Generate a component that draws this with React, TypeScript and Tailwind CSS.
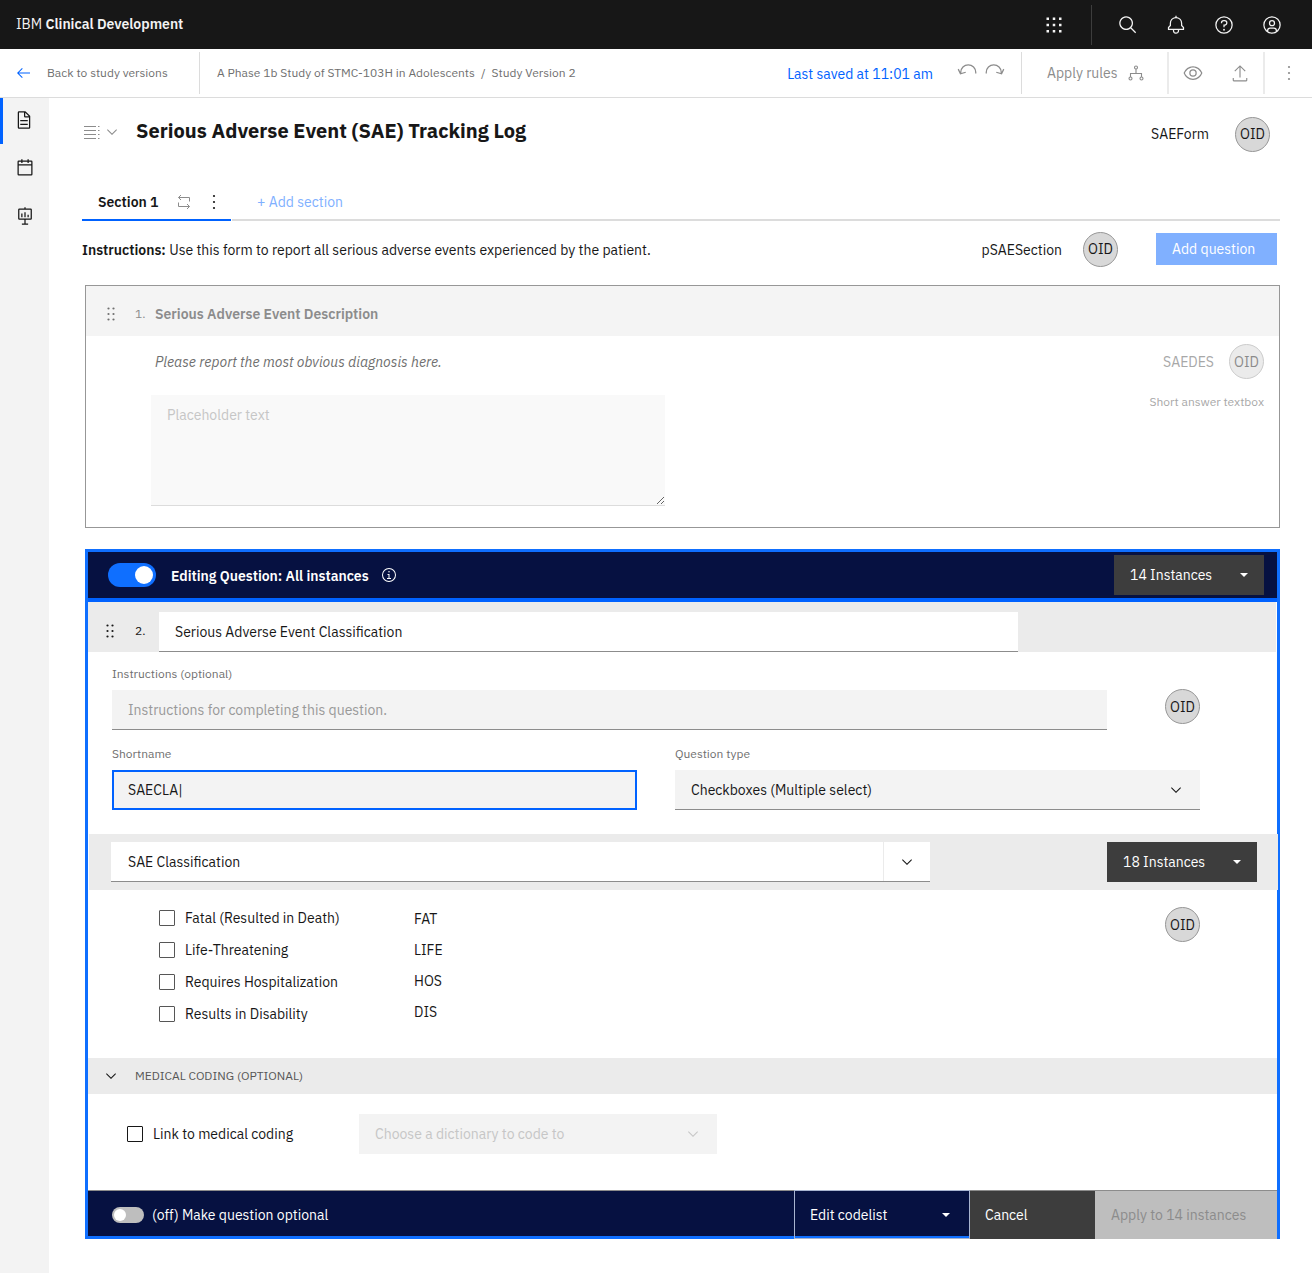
import clsx from 'clsx'
import { useId, useState } from 'react'
import type { ReactNode } from 'react'

interface IconProps {
  size?: number
  className?: string
  children: ReactNode
}

function Icon({ size = 16, className, children }: IconProps) {
  return (
    <svg
      width={size}
      height={size}
      viewBox="0 0 32 32"
      fill="currentColor"
      aria-hidden="true"
      className={clsx('shrink-0', className)}
    >
      {children}
    </svg>
  )
}

type GlyphProps = Omit<IconProps, 'children'>

const ArrowLeft = (props: GlyphProps) => (
  <Icon {...props}>
    <path d="M14 26l1.41-1.41L7.83 17H30v-2H7.83l7.58-7.59L14 6 4 16z" />
  </Icon>
)

const ChevronDown = (props: GlyphProps) => (
  <Icon {...props}>
    <path d="M16 22L6 12l1.4-1.4 8.6 8.6 8.6-8.6L26 12z" />
  </Icon>
)

const CaretDown = (props: GlyphProps) => (
  <Icon {...props}>
    <path d="M24 12l-8 8-8-8z" />
  </Icon>
)

const SearchIcon = (props: GlyphProps) => (
  <Icon {...props}>
    <path d="M29 27.586l-7.552-7.552a11.018 11.018 0 1 0-1.414 1.414L27.586 29zM4 13a9 9 0 1 1 9 9 9.01 9.01 0 0 1-9-9z" />
  </Icon>
)

const BellIcon = (props: GlyphProps) => (
  <Icon {...props}>
    <path d="M28.707 19.293L26 16.586V13a10.014 10.014 0 0 0-9-9.95V1h-2v2.05A10.014 10.014 0 0 0 6 13v3.586l-2.707 2.707A1 1 0 0 0 3 20v3a1 1 0 0 0 1 1h7v.777a5.152 5.152 0 0 0 4.5 5.199A5.006 5.006 0 0 0 21 25v-1h7a1 1 0 0 0 1-1v-3a1 1 0 0 0-.293-.707zM19 25a3 3 0 0 1-6 0v-1h6zm8-3H5v-1.586l2.707-2.707A1 1 0 0 0 8 17v-4a8 8 0 0 1 16 0v4a1 1 0 0 0 .293.707L27 20.414z" />
  </Icon>
)

const HelpIcon = (props: GlyphProps) => (
  <Icon {...props}>
    <path d="M16 2a14 14 0 1 0 14 14A14 14 0 0 0 16 2zm0 26a12 12 0 1 1 12-12 12 12 0 0 1-12 12z" />
    <circle cx="16" cy="23.5" r="1.5" />
    <path d="M17 8h-1.5a4.49 4.49 0 0 0-4.5 4.5v.5h2v-.5a2.5 2.5 0 0 1 2.5-2.5H17a2.5 2.5 0 0 1 0 5h-2v4.5h2V17a4.5 4.5 0 0 0 0-9z" />
  </Icon>
)

const UserIcon = (props: GlyphProps) => (
  <Icon {...props}>
    <path d="M16 8a5 5 0 1 0 5 5 5 5 0 0 0-5-5zm0 8a3 3 0 1 1 3-3 3 3 0 0 1-3 3z" />
    <path d="M16 2a14 14 0 1 0 14 14A14.016 14.016 0 0 0 16 2zm-6 24.377V25a3 3 0 0 1 3-3h6a3 3 0 0 1 3 3v1.377a11.9 11.9 0 0 1-12 0zm13.993-1.451A5 5 0 0 0 19 20h-6a5 5 0 0 0-4.993 4.926 12 12 0 1 1 15.985 0z" />
  </Icon>
)

const SwitcherIcon = (props: GlyphProps) => (
  <Icon {...props}>
    {[4, 14, 24].map((y) => [4, 14, 24].map((x) => <rect key={`${x}-${y}`} x={x} y={y} width="4" height="4" />))}
  </Icon>
)

const DocumentIcon = (props: GlyphProps) => (
  <Icon {...props}>
    <path d="M25.7 9.3l-7-7A1 1 0 0 0 18 2H8a2 2 0 0 0-2 2v24a2 2 0 0 0 2 2h16a2 2 0 0 0 2-2V10a1 1 0 0 0-.3-.7zM18 4.4l5.6 5.6H18zM24 28H8V4h8v6a2 2 0 0 0 2 2h6z" />
    <path d="M10 22h12v2H10zM10 16h12v2H10z" />
  </Icon>
)

const CalendarIcon = (props: GlyphProps) => (
  <Icon {...props}>
    <path d="M26 4h-4V2h-2v2h-8V2h-2v2H6a2 2 0 0 0-2 2v20a2 2 0 0 0 2 2h20a2 2 0 0 0 2-2V6a2 2 0 0 0-2-2zm0 22H6V12h20zm0-16H6V6h4v2h2V6h8v2h2V6h4z" />
  </Icon>
)

const ReportIcon = (props: GlyphProps) => (
  <Icon {...props}>
    <path d="M15 10h2v8h-2zM20 14h2v4h-2zM10 12h2v6h-2z" />
    <path d="M25 4h-8V2h-2v2H7a2 2 0 0 0-2 2v14a2 2 0 0 0 2 2h8v6h-4v2h10v-2h-4v-6h8a2 2 0 0 0 2-2V6a2 2 0 0 0-2-2zm0 16H7V6h18z" />
  </Icon>
)

const ViewIcon = (props: GlyphProps) => (
  <Icon {...props}>
    <path d="M30.94 15.66A16.69 16.69 0 0 0 16 5 16.69 16.69 0 0 0 1.06 15.66a1 1 0 0 0 0 .68A16.69 16.69 0 0 0 16 27a16.69 16.69 0 0 0 14.94-10.66 1 1 0 0 0 0-.68zM16 25c-5.3 0-10.9-3.93-12.93-9C5.1 10.93 10.7 7 16 7s10.9 3.93 12.93 9C26.9 21.07 21.3 25 16 25z" />
    <path d="M16 10a6 6 0 1 0 6 6 6 6 0 0 0-6-6zm0 10a4 4 0 1 1 4-4 4 4 0 0 1-4 4z" />
  </Icon>
)

const ExportIcon = (props: GlyphProps) => (
  <Icon {...props}>
    <path d="M27 25v4H5v-4H3v4a2 2 0 0 0 2 2h22a2 2 0 0 0 2-2v-4zM6 12l1.41 1.41L15 5.83V24h2V5.83l7.59 7.58L26 12 16 2z" />
  </Icon>
)

const OverflowIcon = (props: GlyphProps) => (
  <Icon {...props}>
    <circle cx="16" cy="4" r="2.2" />
    <circle cx="16" cy="16" r="2.2" />
    <circle cx="16" cy="28" r="2.2" />
  </Icon>
)

const DragIcon = (props: GlyphProps) => (
  <Icon {...props}>
    {[5, 16, 27].map((y) => [11, 21].map((x) => <circle key={`${x}-${y}`} cx={x} cy={y} r="2.2" />))}
  </Icon>
)

const UndoIcon = (props: GlyphProps) => (
  <Icon {...props}>
    <path
      d="M30 20V18a12 12 0 0 0-24 0v2M2 13l3.500 7.500 8.500-2.500"
      fill="none"
      stroke="currentColor"
      strokeWidth="2"
    />
  </Icon>
)

const RulesIcon = (props: GlyphProps) => (
  <Icon {...props}>
    <g fill="none" stroke="currentColor" strokeWidth="2.2">
      <circle cx="16" cy="5" r="3" />
      <circle cx="5" cy="27" r="3" />
      <circle cx="27" cy="27" r="3" />
      <path d="M16 8v9M5 24v-7h22v7" />
    </g>
  </Icon>
)

const ListIcon = (props: GlyphProps) => (
  <Icon {...props}>
    <path d="M0 4h24v2H0zM0 12h24v2H0zM0 20h24v2H0zM0 28h24v2H0zM28 4h3v2h-3zM28 12h3v2h-3zM28 20h3v2h-3zM28 28h3v2h-3z" />
  </Icon>
)

const RepeatIcon = (props: GlyphProps) => (
  <Icon {...props}>
    <path
      d="M10 2L5 7l5 5M5 7h22v8M22 20l5 5-5 5M27 25H5v-8"
      fill="none"
      stroke="currentColor"
      strokeWidth="2"
    />
  </Icon>
)

const InfoIcon = (props: GlyphProps) => (
  <Icon {...props}>
    <path d="M17 22v-8h-4v2h2v6h-3v2h8v-2zM16 8a1.500 1.500 0 1 0 1.500 1.500A1.500 1.500 0 0 0 16 8z" />
    <path d="M16 30a14 14 0 1 1 14-14 14 14 0 0 1-14 14zm0-26a12 12 0 1 0 12 12A12 12 0 0 0 16 4z" />
  </Icon>
)

function IconButton({ label, className, children }: { label: string; className?: string; children: ReactNode }) {
  return (
    <button type="button" aria-label={label} className={clsx('flex items-center justify-center', className)}>
      {children}
    </button>
  )
}

function OidBadge({ muted = false }: { muted?: boolean }) {
  return (
    <button
      type="button"
      className={clsx(
        'flex size-[35px] shrink-0 items-center justify-center rounded-full border text-sm',
        muted ? 'border-[#cccccc] bg-[#ebebeb] text-[#8b8b8b]' : 'border-[#979797] bg-[#d8d8d8] text-[#171717]',
      )}
    >
      OID
    </button>
  )
}

function InstancesButton({ count }: { count: number }) {
  return (
    <button
      type="button"
      className="flex h-10 w-[150px] shrink-0 items-center justify-between bg-[#3d3d3d] pl-4 pr-3 text-white"
    >
      {count} Instances
      <CaretDown />
    </button>
  )
}

function AppHeader() {
  return (
    <header className="flex h-[49px] items-center justify-between bg-[#171717] px-4 text-[#f3f3f3]">
      <a href="#" className="pb-0.5 text-sm">
        IBM <span className="font-semibold">Clinical Development</span>
      </a>
      <div className="flex items-center">
        <IconButton label="Switch application" className="mr-[13px] size-12">
          <SwitcherIcon size={20} />
        </IconButton>
        <div className="mr-3 h-10 w-px bg-[#3d3d3d]" />
        <IconButton label="Search" className="size-12">
          <SearchIcon size={20} />
        </IconButton>
        <IconButton label="Notifications" className="size-12">
          <BellIcon size={20} />
        </IconButton>
        <IconButton label="Help" className="size-12">
          <HelpIcon size={20} />
        </IconButton>
        <IconButton label="Account" className="size-12">
          <UserIcon size={20} />
        </IconButton>
      </div>
    </header>
  )
}

function StudyBar() {
  return (
    <div className="flex h-[49px] items-center border-b border-[#dcdcdc] text-xs text-[#6f6f6f]">
      <a href="#" className="flex h-[42px] w-[200px] items-center gap-4 border-r border-[#dcdcdc] pl-[15px]">
        <ArrowLeft className="text-[#0062ff]" />
        Back to study versions
      </a>
      <nav aria-label="Breadcrumb" className="flex-1 pl-[17px]">
        <a href="#">A Phase 1b Study of STMC-103H in Adolescents</a>
        <span className="px-1.5">/</span>
        <span>Study Version 2</span>
      </nav>
      <p className="pr-6 pt-0.5 text-sm text-[#0062ff]">Last saved at 11:01 am</p>
      <IconButton label="Undo" className="pb-1 text-[#8c8c8c]">
        <UndoIcon size={20} />
      </IconButton>
      <IconButton label="Redo" className="ml-2 pb-1 pr-4 text-[#8c8c8c]">
        <UndoIcon size={20} className="-scale-x-100" />
      </IconButton>
      <button
        type="button"
        className="flex h-[42px] w-[146px] items-center justify-between border-l border-[#dcdcdc] pl-[25px] pr-[23px] text-sm text-[#8c8c8c]"
      >
        Apply rules
        <RulesIcon />
      </button>
      <div className="grid h-[42px] w-24 grid-cols-2 border-l-2 border-[#ebebeb] text-[#8c8c8c]">
        <IconButton label="Preview">
          <ViewIcon size={20} />
        </IconButton>
        <IconButton label="Export">
          <ExportIcon size={18} />
        </IconButton>
      </div>
      <IconButton label="More actions" className="h-[42px] w-[49px] border-l-2 border-[#ebebeb] text-[#8c8c8c]">
        <OverflowIcon />
      </IconButton>
    </div>
  )
}

function SideNav() {
  return (
    <nav aria-label="Study" className="flex w-[49px] shrink-0 flex-col bg-[#f3f3f3] text-[#171717]">
      <a href="#" aria-label="Forms" className="flex h-[46px] items-center border-l-[3px] border-[#0062ff] pb-0.5 pl-[11px]">
        <DocumentIcon size={20} />
      </a>
      <a href="#" aria-label="Schedule" className="flex h-12 items-center pl-[15px]">
        <CalendarIcon size={20} />
      </a>
      <a href="#" aria-label="Reports" className="flex h-12 items-center pl-[15px]">
        <ReportIcon size={20} />
      </a>
    </nav>
  )
}

function DescriptionCard() {
  return (
    <section className="ml-[3px] mt-[18px] border border-[#979797]">
      <div className="flex h-[50px] items-center bg-[#f4f4f4] pl-[17px] pt-1.5 text-[#8c8c8c]">
        <DragIcon className="text-[#6f6f6f]" />
        <span className="w-9 pl-4 text-xs">1.</span>
        <h2 className="font-semibold">Serious Adverse Event Description</h2>
      </div>
      <div className="flex items-start justify-between pb-[21px] pl-[65px] pr-[15px]">
        <div>
          <p className="ml-1 mt-4 italic text-[#6f6f6f]">Please report the most obvious diagnosis here.</p>
          <textarea
            aria-label="Serious Adverse Event Description"
            placeholder="Placeholder text"
            className="mt-[23px] block h-[111px] w-[514px] border-b border-[#dcdcdc] bg-[#f9f9f9] px-4 py-2.5 outline-none placeholder:text-[#c6c6c6]"
          />
        </div>
        <div className="flex flex-col items-end pt-2">
          <div className="flex items-center gap-[15px] text-[#a8a8a8]">
            SAEDES
            <OidBadge muted />
          </div>
          <p className="mt-[15px] text-xs text-[#a8a8a8]">Short answer textbox</p>
        </div>
      </div>
    </section>
  )
}

interface SelectFieldProps {
  id?: string
  label?: string
  options: string[]
  disabled?: boolean
  className: string
}

function SelectField({ id, label, options, disabled = false, className }: SelectFieldProps) {
  return (
    <div className="relative">
      <select
        id={id}
        aria-label={label}
        disabled={disabled}
        className={clsx('h-10 w-full appearance-none px-4 outline-none disabled:opacity-100', className)}
      >
        {options.map((option) => (
          <option key={option}>{option}</option>
        ))}
      </select>
      <ChevronDown
        className={clsx(
          'pointer-events-none absolute right-4 top-3',
          disabled ? 'text-[#c6c6c6]' : 'text-[#171717]',
        )}
      />
    </div>
  )
}

function Checkbox({ label, className }: { label: string; className?: string }) {
  return (
    <label className="flex h-8 items-center gap-2.5">
      <input
        type="checkbox"
        className={clsx('size-4 shrink-0 appearance-none rounded-[1px] border checked:bg-[#171717]', className)}
      />
      {label}
    </label>
  )
}

const seriousOutcomes = [
  { label: 'Fatal (Resulted in Death)', code: 'FAT' },
  { label: 'Life-Threatening', code: 'LIFE' },
  { label: 'Requires Hospitalization', code: 'HOS' },
  { label: 'Results in Disability', code: 'DIS' },
]

function QuestionEditor() {
  const id = useId()
  const [allInstances, setAllInstances] = useState(true)
  const [optional, setOptional] = useState(false)
  const [title, setTitle] = useState('Serious Adverse Event Classification')
  const [shortname, setShortname] = useState('SAECLA|')

  return (
    <section className="ml-[3px] mt-[21px] border-[3px] border-[#0f6fff]">
      <div className="flex h-[50px] items-center border-b-4 border-[#0062ff] bg-[#061141] pl-5 pr-[13px] text-white">
        <input
          id={`${id}-all`}
          type="checkbox"
          role="switch"
          checked={allInstances}
          onChange={(e) => setAllInstances(e.target.checked)}
          className="flex h-6 w-12 appearance-none items-center rounded-full bg-[#bebebe] px-[3px] before:size-[18px] before:rounded-full before:bg-white checked:justify-end checked:bg-[#0f6fff]"
        />
        <label htmlFor={`${id}-all`} className="ml-[15px] pt-0.5 font-semibold">
          Editing Question: All instances
        </label>
        <IconButton label="About editing all instances" className="ml-3">
          <InfoIcon />
        </IconButton>
        <div className="flex-1" />
        <InstancesButton count={14} />
      </div>

      <div className="mr-px flex h-[50px] items-center bg-[#ebebeb] pl-[14px] pt-2">
        <DragIcon />
        <span className="w-[41px] pl-[17px] text-xs">2.</span>
        <input
          type="text"
          aria-label="Question title"
          value={title}
          onChange={(e) => setTitle(e.target.value)}
          className="mr-[258px] h-10 min-w-0 flex-1 self-end border-b border-[#8c8c8c] bg-white px-4 outline-none"
        />
      </div>

      <div className="pb-6 pl-6 pr-[77px]">
        <label htmlFor={`${id}-instructions`} className="block pb-2 pt-[14px] text-xs text-[#6f6f6f]">
          Instructions (optional)
        </label>
        <div className="flex items-start gap-[58px]">
          <input
            id={`${id}-instructions`}
            type="text"
            placeholder="Instructions for completing this question."
            className="h-10 min-w-0 flex-1 border-b border-[#8c8c8c] bg-[#f3f3f3] px-4 outline-none placeholder:text-[#999999]"
          />
          <div className="-mt-px">
            <OidBadge />
          </div>
        </div>
        <div className="mt-4 grid grid-cols-2 gap-[38px]">
          <div>
            <label htmlFor={`${id}-shortname`} className="block pb-2 text-xs text-[#6f6f6f]">
              Shortname
            </label>
            <input
              id={`${id}-shortname`}
              type="text"
              value={shortname}
              onChange={(e) => setShortname(e.target.value)}
              className="h-10 w-full border-2 border-[#0062ff] bg-[#f3f3f3] px-[14px] outline-none"
            />
          </div>
          <div>
            <label htmlFor={`${id}-type`} className="block pb-2 text-xs text-[#6f6f6f]">
              Question type
            </label>
            <SelectField
              id={`${id}-type`}
              options={['Checkboxes (Multiple select)', 'Short answer textbox']}
              className="border-b border-[#8c8c8c] bg-[#f3f3f3]"
            />
          </div>
        </div>
      </div>

      <div className="-mr-px ml-px flex h-14 items-center justify-between bg-[#ebebeb] pl-[22px] pr-[21px]">
        <div className="flex h-10 flex-1 border-b border-[#8c8c8c] bg-white">
          <input
            type="text"
            aria-label="Codelist"
            defaultValue="SAE Classification"
            className="min-w-0 flex-1 pl-[17px] outline-none"
          />
          <IconButton label="Choose a codelist" className="w-[47px] border-l border-[#ebebeb]">
            <ChevronDown />
          </IconButton>
        </div>
        <div className="ml-[177px]">
          <InstancesButton count={18} />
        </div>
      </div>

      <div className="flex pb-7 pl-[71px] pr-[77px] pt-3">
        <div className="w-[255px]">
          {seriousOutcomes.map(({ label }) => (
            <Checkbox key={label} label={label} className="border-[#565656]" />
          ))}
        </div>
        <ul className="flex-1 pt-px">
          {seriousOutcomes.map(({ code }) => (
            <li key={code} className="flex h-[31px] items-center">
              {code}
            </li>
          ))}
        </ul>
        <div className="pt-[5px]">
          <OidBadge />
        </div>
      </div>

      <button
        type="button"
        aria-expanded="true"
        className="flex h-9 w-full items-center gap-4 bg-[#ebebeb] pl-[15px] text-xs text-[#565656]"
      >
        <ChevronDown className="text-[#171717]" />
        MEDICAL CODING (OPTIONAL)
      </button>

      <div className="flex items-center pb-9 pl-[39px] pt-5">
        <div className="w-[232px]">
          <Checkbox label="Link to medical coding" className="border-[#171717]" />
        </div>
        <div className="w-[358px]">
          <SelectField
            label="Dictionary"
            options={['Choose a dictionary to code to']}
            disabled
            className="bg-[#f3f3f3] text-[#c6c6c6]"
          />
        </div>
      </div>

      <div className="flex h-[46px] items-start bg-[#061141] text-white">
        <div className="flex h-[46px] flex-1 items-center gap-2 border-t border-[#8c8c8c] pl-6 pt-0.5">
          <input
            id={`${id}-optional`}
            type="checkbox"
            role="switch"
            checked={optional}
            onChange={(e) => setOptional(e.target.checked)}
            className="flex h-4 w-8 appearance-none items-center rounded-full bg-[#bebebe] px-0.5 before:size-3 before:rounded-full before:bg-white checked:justify-end checked:bg-[#0f6fff]"
          />
          <label htmlFor={`${id}-optional`}>({optional ? 'on' : 'off'}) Make question optional</label>
        </div>
        <button
          type="button"
          className="flex h-[49px] w-[176px] items-center justify-between border border-[#a8b4d0] px-[15px]"
        >
          Edit codelist
          <CaretDown />
        </button>
        <button
          type="button"
          className="h-[49px] w-[125px] border-t border-[#8c8c8c] bg-[#3d3d3d] pl-[15px] text-left"
        >
          Cancel
        </button>
        <button
          type="button"
          disabled
          className="h-[49px] w-[182px] border-t border-[#8c8c8c] bg-[#bebebe] pl-4 text-left text-[#8c8c8c]"
        >
          Apply to 14 instances
        </button>
      </div>
    </section>
  )
}

export default function App() {
  return (
    <div className="flex min-h-screen flex-col bg-white font-['IBM_Plex_Sans','Noto_Sans',sans-serif] text-sm text-[#171717]">
      <AppHeader />
      <StudyBar />
      <div className="flex flex-1">
        <SideNav />
        <main className="min-w-0 flex-1 pb-[34px] pl-[33px] pr-8 pt-[18px]">
          <div className="flex h-9 items-center justify-between">
            <div className="flex items-center pb-1.5">
              <IconButton label="Change form" className="gap-1 pl-0.5 pt-0.5 text-[#8c8c8c]">
                <ListIcon />
                <ChevronDown />
              </IconButton>
              <h1 className="ml-4 text-xl font-bold">Serious Adverse Event (SAE) Tracking Log</h1>
            </div>
            <div className="flex items-center gap-[26px] pr-2.5">
              SAEForm
              <OidBadge />
            </div>
          </div>

          <div className="mt-8 flex h-[37px] gap-px">
            <div className="flex w-[149px] items-center border-b-2 border-[#0062ff] pl-4">
              <button type="button" className="w-[78px] text-left font-semibold">
                Section 1
              </button>
              <IconButton label="Repeat section" className="text-[#8c8c8c]">
                <RepeatIcon />
              </IconButton>
              <IconButton label="Section actions" className="ml-[14px]">
                <OverflowIcon />
              </IconButton>
            </div>
            <div className="flex flex-1 items-center border-b-2 border-[#dcdcdc] pl-[25px]">
              <button type="button" className="text-[#80b0ff]">
                + Add section
              </button>
            </div>
          </div>

          <div className="mt-2.5 flex h-9 items-center">
            <p className="flex-1 pt-0.5">
              <strong className="font-semibold">Instructions:</strong> Use this form to report all serious adverse
              events experienced by the patient.
            </p>
            <span className="mr-[21px] pt-0.5">pSAESection</span>
            <OidBadge />
            <button type="button" className="ml-[38px] mr-[3px] h-8 w-[121px] bg-[#80b0ff] pl-4 text-left text-white">
              Add question
            </button>
          </div>

          <DescriptionCard />
          <QuestionEditor />
        </main>
      </div>
    </div>
  )
}
